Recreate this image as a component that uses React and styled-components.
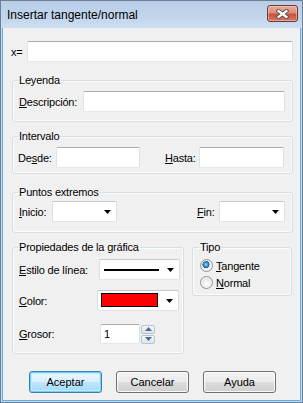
import styled, { createGlobalStyle } from "styled-components";

const GlobalStyle = createGlobalStyle`
  html, body {
    margin: 0;
    padding: 0;
  }
  body {
    background: #f0f0f0;
    font-family: "Liberation Sans", Arial, sans-serif;
    font-size: 11px;
    color: #000;
  }
`;

function DropArrow() {
  return (
    <svg width="7" height="4" viewBox="0 0 7 4">
      <polygon points="0,0 7,0 3.5,4" fill="#000" />
    </svg>
  );
}

function CloseGlyph() {
  return (
    <svg width="13" height="10" viewBox="0 0 13 10">
      <path d="M2.5 2 L10.5 8 M10.5 2 L2.5 8" stroke="#4a4a4a" strokeWidth="4" strokeLinecap="square" />
      <path d="M2.5 2 L10.5 8 M10.5 2 L2.5 8" stroke="#fff" strokeWidth="2.2" strokeLinecap="square" />
    </svg>
  );
}

function SpinArrow({ down }) {
  return (
    <svg width="7" height="4" viewBox="0 0 7 4">
      <polygon points={down ? "0,0 7,0 3.5,4" : "0,4 7,4 3.5,0"} fill="#4f6a9a" />
    </svg>
  );
}

export default function App() {
  return (
    <>
      <GlobalStyle />
      <Window>
        <TitleBar>
          <Title>Insertar tangente/normal</Title>
          <CloseButton>
            <CloseGlyph />
          </CloseButton>
        </TitleBar>
        <Body>
          <XRow>
            <Label $w={16} $shift={-1}>x=</Label>
            <TextBox $grow />
          </XRow>

          <Group $mt={12} $pt={4} $pb={9}>
            <Legend>Leyenda</Legend>
            <Row>
              <Label $w={64}>
                <u>D</u>escripción:
              </Label>
              <TextBox $grow />
            </Row>
          </Group>

          <Group $mt={8} $pt={4} $pb={5}>
            <Legend>Intervalo</Legend>
            <Row>
              <Label $w={38} $shift={-1}>
                De<u>s</u>de:
              </Label>
              <TextBox $w={84} />
              <Label $w={34} $left={25}>
                <u>H</u>asta:
              </Label>
              <TextBox $w={85} />
            </Row>
          </Group>

          <Group $mt={12} $pt={2} $pb={10}>
            <Legend>Puntos extremos</Legend>
            <Row>
              <Label $w={33}>
                <u>I</u>nicio:
              </Label>
              <Combo $w={65}>
                <DropArrow />
              </Combo>
              <Label $w={22} $left={80}>
                <u>F</u>in:
              </Label>
              <Combo $w={66}>
                <DropArrow />
              </Combo>
            </Row>
          </Group>

          <BottomRow>
            <Group $w={172} $pt={5} $pb={9} $pr={3}>
              <Legend>Propiedades de la gráfica</Legend>
              <Row>
                <Label $w={80}>
                  <u>E</u>stilo de línea:
                </Label>
                <Combo $w={81} $pl={4}>
                  <LineSample />
                  <DropArrow />
                </Combo>
              </Row>
              <Row $mt={10}>
                <Label $w={78}>
                  <u>C</u>olor:
                </Label>
                <Combo $w={82} $pl={3}>
                  <Swatch $color="#ff0000" />
                  <DropArrow />
                </Combo>
              </Row>
              <Row $mt={13} $h={20}>
                <Label $w={81}>
                  <u>G</u>rosor:
                </Label>
                <SpinBox defaultValue="1" />
                <SpinButtons>
                  <SpinButton>
                    <SpinArrow />
                  </SpinButton>
                  <SpinButton>
                    <SpinArrow down />
                  </SpinButton>
                </SpinButtons>
              </Row>
            </Group>

            <Group $w={100} $pt={3} $pb={4} $pl={7}>
              <Legend>Tipo</Legend>
              <RadioRow>
                <Radio $checked />
                <span>
                  <u>T</u>angente
                </span>
              </RadioRow>
              <RadioRow>
                <Radio />
                <span>
                  <u>N</u>ormal
                </span>
              </RadioRow>
            </Group>
          </BottomRow>

          <ButtonRow>
            <Button $default>Aceptar</Button>
            <Button>Cancelar</Button>
            <Button>Ayuda</Button>
          </ButtonRow>
        </Body>
      </Window>
    </>
  );
}

const Window = styled.div`
  width: 303px;
  height: 403px;
  box-sizing: border-box;
  display: flex;
  flex-direction: column;
  border: 1px solid #6b7f96;
  padding: 0 1px 1px;
  background: #c6d8ed;
  overflow: hidden;
`;

const TitleBar = styled.div`
  height: 27px;
  margin: 0 -1px;
  padding: 0 4px 0 6px;
  display: flex;
  align-items: center;
  justify-content: space-between;
  background: linear-gradient(180deg, #b9cde7 0%, #c3d6ec 65%, #cddef1 100%);
`;

const Title = styled.span`
  font-size: 12px;
  color: #000;
  margin-top: 1px;
`;

const CloseButton = styled.div`
  width: 31px;
  height: 17px;
  box-sizing: border-box;
  align-self: flex-start;
  margin-top: 4px;
  display: flex;
  align-items: center;
  justify-content: center;
  border: 1px solid #6f3a36;
  border-radius: 3px;
  background: linear-gradient(180deg, #e9ab9d 0%, #dc8c79 45%, #c4523c 55%, #d27a66 100%);
  box-shadow: inset 0 0 0 1px rgba(255, 220, 210, 0.45);
`;

const Body = styled.div`
  flex: 1;
  display: flex;
  flex-direction: column;
  background: #f0f0f0;
  border: 1px solid #62b1e4;
  border-top: none;
  padding: 13px 7px 0 9px;
`;

const XRow = styled.div`
  display: flex;
  align-items: center;
  height: 21px;
`;

const Row = styled.div`
  display: flex;
  align-items: center;
  height: ${(p) => p.$h || 21}px;
  margin-top: ${(p) => p.$mt || 0}px;
`;

const Label = styled.label`
  flex: none;
  width: ${(p) => p.$w}px;
  margin-left: ${(p) => (p.$left || 0) + (p.$shift || 0)}px;
  letter-spacing: -0.2px;
  white-space: nowrap;

  u {
    text-underline-offset: 1px;
  }
`;

const TextBox = styled.input`
  box-sizing: border-box;
  height: 21px;
  width: ${(p) => (p.$w ? `${p.$w}px` : "auto")};
  flex: ${(p) => (p.$grow ? "1" : "none")};
  min-width: 0;
  margin: 0;
  padding: 0 3px;
  font: inherit;
  background: #fff;
  border: 1px solid;
  border-color: #abadb3 #dbdfe6 #e3e9ef #e2e3ea;
  border-radius: 2px;
  outline: none;
`;

const Group = styled.fieldset`
  box-sizing: border-box;
  margin: ${(p) => p.$mt || 0}px 0 0;
  min-width: 0;
  width: ${(p) => (p.$w ? `${p.$w}px` : "auto")};
  align-self: ${(p) => (p.$w ? "flex-start" : "stretch")};
  flex: none;
  padding: ${(p) => p.$pt}px ${(p) => p.$pr ?? 7}px ${(p) => p.$pb}px
    ${(p) => p.$pl ?? 6}px;
  border: 1px solid #d5dfe5;
  border-radius: 3px;
  box-shadow: inset 0 0 0 1px #fbfbfb;
`;

const Legend = styled.legend`
  padding: 0 1px;
  margin-left: -1px;
  line-height: 13px;
  letter-spacing: -0.2px;
  color: #000;
`;

const Combo = styled.div`
  box-sizing: border-box;
  flex: none;
  width: ${(p) => p.$w}px;
  height: 21px;
  padding: 0 5px 0 ${(p) => p.$pl || 0}px;
  display: flex;
  align-items: center;
  justify-content: flex-end;
  gap: 8px;
  background: #fff;
  border: 1px solid;
  border-color: #c5c9ce #dadde2 #e1e5ea #dadde2;
  border-radius: 2px;
`;

const LineSample = styled.div`
  flex: 1;
  height: 2px;
  background: #000;
`;

const Swatch = styled.div`
  flex: 1;
  align-self: flex-start;
  margin-top: 2px;
  height: 14px;
  box-sizing: border-box;
  background: ${(p) => p.$color};
  border: 1px solid #000;
`;

const BottomRow = styled.div`
  display: flex;
  gap: 8px;
  margin-top: 8px;
`;

const SpinBox = styled.input`
  box-sizing: border-box;
  width: 40px;
  height: 20px;
  margin: 0;
  padding: 0 3px;
  font: inherit;
  background: #fff;
  border: 1px solid;
  border-color: #abadb3 #dbdfe6 #e3e9ef #e2e3ea;
  border-radius: 2px;
  outline: none;
`;

const SpinButtons = styled.div`
  display: flex;
  flex-direction: column;
  gap: 1px;
  margin-left: 1px;
`;

const SpinButton = styled.div`
  box-sizing: border-box;
  width: 14px;
  height: 9px;
  display: flex;
  align-items: center;
  justify-content: center;
  border: 1px solid #b9c3cf;
  border-radius: 2px;
  background: linear-gradient(180deg, #f3f5f8 0%, #dfe5ec 100%);
`;

const RadioRow = styled.div`
  display: flex;
  align-items: center;
  gap: 3px;
  height: 17px;
  letter-spacing: -0.2px;

  u {
    text-underline-offset: 1px;
  }
`;

const Radio = styled.span`
  box-sizing: border-box;
  width: 13px;
  height: 13px;
  border-radius: 50%;
  border: 1px solid #8f9295;
  background: ${(p) =>
    p.$checked
      ? "radial-gradient(circle at 45% 40%, #9fdcff 0, #3d95d2 22%, #1d5b94 38%, #e9e9e9 42%, #ffffff 100%)"
      : "radial-gradient(circle at 50% 60%, #ffffff 0, #f0f0f0 35%, #d6d6d6 100%)"};
  box-shadow: inset 0 0 0 1px #f4f4f4;
`;

const ButtonRow = styled.div`
  display: flex;
  justify-content: center;
  gap: 14px;
  margin-top: 17px;
`;

const Button = styled.button`
  box-sizing: border-box;
  width: 73px;
  height: 22px;
  margin: 0;
  padding: 0;
  font: inherit;
  color: #000;
  border: 1px solid ${(p) => (p.$default ? "#3c7fb1" : "#707070")};
  border-radius: 3px;
  background: ${(p) =>
    p.$default
      ? "linear-gradient(180deg, #eaf6fd 0%, #d9f0fc 50%, #bee6fd 50%, #a7d9f5 100%)"
      : "linear-gradient(180deg, #f2f2f2 0%, #ebebeb 50%, #dddddd 50%, #cfcfcf 100%)"};
  box-shadow: ${(p) =>
    p.$default ? "inset 0 0 0 1px #6fd0f5, inset 0 0 0 2px #c6ebfa" : "inset 0 0 0 1px #fbfbfb"};
`;
